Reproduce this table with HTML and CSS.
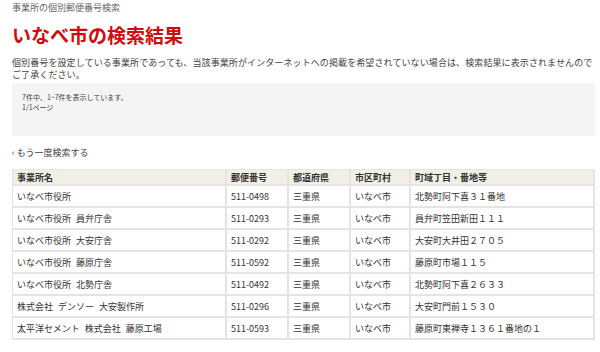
FILE: index.html
```html
<!DOCTYPE html>
<html lang="ja">
<head>
<meta charset="utf-8">
<title>いなべ市の検索結果</title>
<link rel="stylesheet" href="styles.css">
</head>
<body>
<div class="page">
  <div class="crumb">事業所の個別郵便番号検索</div>
  <h1 class="title">いなべ市の検索結果</h1>
  <p class="note">個別番号を設定している事業所であっても、当該事業所がインターネットへの掲載を希望されていない場合は、検索結果に表示されませんので<br>ご了承ください。</p>
  <div class="summary">
    <div>7件中、1~7件を表示しています。</div>
    <div>1/1ページ</div>
  </div>
  <a class="back" href="#"><span class="chev">‹</span>もう一度検索する</a>
  <table class="results">
    <thead>
      <tr>
        <th class="c-name">事業所名</th>
        <th class="c-zip">郵便番号</th>
        <th class="c-pref">都道府県</th>
        <th class="c-city">市区町村</th>
        <th>町域丁目・番地等</th>
      </tr>
    </thead>
    <tbody>
      <tr><td>いなべ市役所</td><td>511-0498</td><td>三重県</td><td>いなべ市</td><td>北勢町阿下喜３１番地</td></tr>
      <tr><td>いなべ市役所 員弁庁舎</td><td>511-0293</td><td>三重県</td><td>いなべ市</td><td>員弁町笠田新田１１１</td></tr>
      <tr><td>いなべ市役所 大安庁舎</td><td>511-0292</td><td>三重県</td><td>いなべ市</td><td>大安町大井田２７０５</td></tr>
      <tr><td>いなべ市役所 藤原庁舎</td><td>511-0592</td><td>三重県</td><td>いなべ市</td><td>藤原町市場１１５</td></tr>
      <tr><td>いなべ市役所 北勢庁舎</td><td>511-0492</td><td>三重県</td><td>いなべ市</td><td>北勢町阿下喜２６３３</td></tr>
      <tr><td>株式会社 デンソー 大安製作所</td><td>511-0296</td><td>三重県</td><td>いなべ市</td><td>大安町門前１５３０</td></tr>
      <tr><td>太平洋セメント 株式会社 藤原工場</td><td>511-0593</td><td>三重県</td><td>いなべ市</td><td>藤原町東禅寺１３６１番地の１</td></tr>
    </tbody>
  </table>
</div>
</body>
</html>
```
FILE: styles.css
```css
html, body {
  margin: 0;
  padding: 0;
  background: #fff;
}

body {
  font-family: "Noto Sans CJK JP", "Noto Sans", sans-serif;
  color: #333;
}

.page {
  width: 583px;
  padding: 1px 0 0 12px;
}

.crumb {
  font-size: 9px;
  line-height: 13px;
  color: #666;
}

.title {
  margin: 9px 0 0;
  font-size: 19px;
  line-height: 24px;
  font-weight: bold;
  color: #d00d0d;
}

.note {
  margin: 10px 0 0;
  font-size: 9px;
  line-height: 12px;
  letter-spacing: 0.1px;
  color: #444;
}

.summary {
  margin-top: 2px;
  height: 53px;
  box-sizing: border-box;
  padding: 9px 10px 0;
  background: #f4f4f4;
  font-size: 7px;
  line-height: 10px;
  color: #444;
}

.back {
  display: block;
  margin-top: 11px;
  font-size: 9px;
  line-height: 12px;
  color: #444;
  text-decoration: none;
}

.chev {
  color: #d00d0d;
  margin-right: 2px;
}

.results {
  margin-top: 10px;
  width: 583px;
  border-collapse: collapse;
  border: 1px solid #e4e4e4;
  font-size: 9px;
}

.results th,
.results td {
  text-align: left;
  padding: 0 4px;
  border: 1px solid #e4e4e4;
  border-width: 0 2px 2px 0;
}

.results th {
  height: 14px;
  background: #f2efe6;
  font-weight: bold;
  color: #333;
}

.results td {
  height: 20px;
  color: #333;
  word-spacing: 3px;
}

.c-name { width: 204px; }
.c-zip { width: 52px; }
.c-pref { width: 52px; }
.c-city { width: 50px; }
```
